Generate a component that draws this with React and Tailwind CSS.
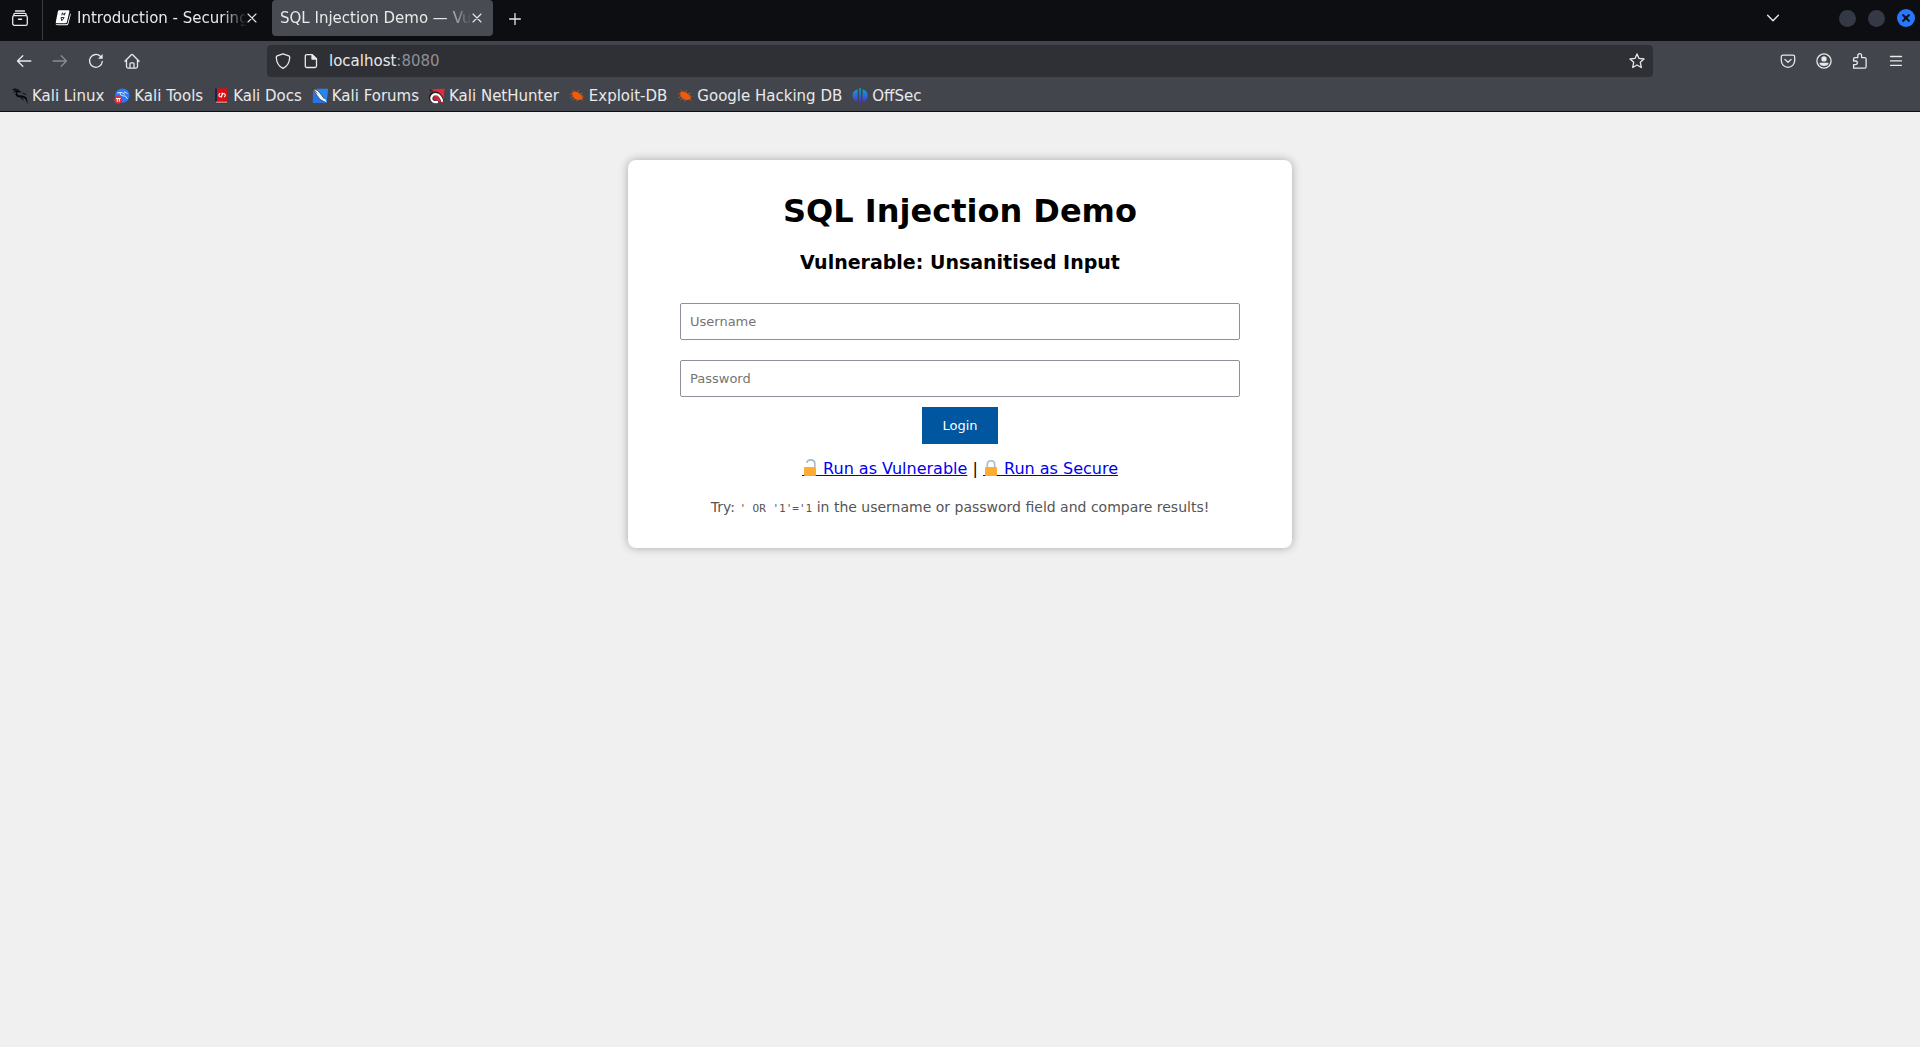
import React from "react";

const sans = "font-['DejaVu_Sans',sans-serif]";

function Icon({ size = "size-4", children, box = "0 0 16 16" }) {
  return (
    <svg
      className={size + " shrink-0"}
      viewBox={box}
      fill="none"
      stroke="currentColor"
      strokeWidth="1.3"
      strokeLinecap="round"
      strokeLinejoin="round"
      aria-hidden="true"
    >
      {children}
    </svg>
  );
}

const SidebarIcon = () => (
  <Icon>
    <path d="M3.5 1h9M1.800 5V4.800Q1.800 3.300 3.300 3.300H12.700Q14.200 3.300 14.200 4.800V5" />
    <rect x="0.7" y="5.600" width="14.600" height="9.700" rx="1.600" />
    <path d="M6.500 9.200h3" strokeWidth="1.500" />
  </Icon>
);

const BookIcon = () => (
  <svg className="size-4 shrink-0" viewBox="0 0 16 16" aria-hidden="true">
    <path d="M4.200.3h9.200q1.300 0 1 1.300l-2.500 10.400q-.3 1.200-1.500 1.200H1.800q-1.300 0-1-1.300L2.900 1.500Q3.200.3 4.200.3Z" fill="#fff" />
    <path d="M15.300 3.200q.7.500.4 1.500l-2.300 9q-.4 1.500-1.800 1.500H2.400Q.8 15.200.3 13.500q.6.800 1.800.8h9q1.300 0 1.600-1.300Z" fill="#fff" />
    <path d="M6.800 5.400l.7-2.600.9 1.700 1.700-1.700-.7 2.600M6.800 10.800l-.8-3.200h3.200l-2.400 3.200" stroke="#15161a" strokeWidth=".9" fill="none" />
  </svg>
);

const CloseIcon = () => (
  <Icon size="size-2.5" box="0 0 10 10">
    <path d="M1 1l8 8M9 1L1 9" strokeWidth="1.1" />
  </Icon>
);
const PlusIcon = () => (
  <Icon size="size-3" box="0 0 12 12">
    <path d="M6 .6v10.800M.6 6h10.800" />
  </Icon>
);
const ChevronIcon = () => (
  <Icon size="size-3" box="0 0 12 12">
    <path d="M.6 3.300L6 8.700l5.400-5.400" strokeWidth="1.400" />
  </Icon>
);
const BackIcon = () => (
  <Icon>
    <path d="M6.800 2.700L1.500 8l5.300 5.300M1.800 8h13" />
  </Icon>
);
const ForwardIcon = () => (
  <Icon>
    <path d="M9.200 2.700L14.500 8l-5.300 5.300M14.200 8h-13" />
  </Icon>
);
const ReloadIcon = () => (
  <Icon>
    <path d="M14.300 8.500A6.400 6.400 0 1 1 12.600 3.500" />
    <path d="M14.700 1v4.700H10z" fill="currentColor" stroke="none" />
  </Icon>
);
const HomeIcon = () => (
  <Icon>
    <path d="M.9 8.200L7.300 1.700Q8 1.100 8.700 1.700L15.100 8.200M2.500 7v6.600q0 1.500 1.500 1.500h8q1.500 0 1.500-1.500V7M6 15V10.800q0-1 1-1h2q1 0 1 1V15" />
  </Icon>
);
const ShieldIcon = () => (
  <Icon>
    <path d="M8 .8L13.800 2.900Q14.800 3.300 14.700 4.400C14.500 9.800 11.800 13.500 8 15.300C4.200 13.500 1.500 9.800 1.300 4.400Q1.200 3.300 2.200 2.900Z" />
  </Icon>
);
const PageIcon = () => (
  <Icon>
    <path d="M3.800 1.600h5.400l4.300 4.200v7.200q0 1.500-1.500 1.500H3.800q-1.500 0-1.500-1.500V3.100q0-1.500 1.500-1.500Z" />
    <path d="M9 1.600v4.500h4.500z" fill="currentColor" />
  </Icon>
);
const StarIcon = () => (
  <Icon>
    <path d="M8 .9l2 4.500 5 .6-3.700 3.300 1 5.200L8 12l-4.300 2.500 1-5.200L1 6l5-.6Z" />
  </Icon>
);
const PocketIcon = () => (
  <Icon>
    <path d="M3 2.200h10q1.700 0 1.700 1.700V7.600a6.700 6.700 0 0 1-13.400 0V3.900Q1.300 2.200 3 2.200ZM4.900 6.400L8 9.300l3.100-2.900" />
  </Icon>
);
const AccountIcon = () => (
  <Icon>
    <circle cx="8" cy="8" r="7.100" />
    <circle cx="8" cy="5.900" r="2.700" fill="currentColor" stroke="none" />
    <path d="M3.400 9.700h9.200q-.5 3.300-4.600 3.300t-4.600-3.300z" fill="currentColor" stroke="none" />
  </Icon>
);
const PuzzleIcon = () => (
  <Icon>
    <path d="M1.600 15.200V11.600h2a1.800 1.800 0 0 0 0-3.600h-2V5.800q0-1.200 1.200-1.200H5.800V2.600a1.900 1.900 0 0 1 3.800 0V4.600h3q1.500 0 1.500 1.500v7.600q0 1.500-1.500 1.500Z" />
  </Icon>
);
const MenuIcon = () => (
  <Icon>
    <path d="M2.500 3.500h11M2.500 7.900h11M2.500 12.300h11" />
  </Icon>
);

const dragon = "M0 1.700L4.500.3 3 1.500 7 1.400 6 2.500Q9 2.600 8.700 4.400L7 4Q4.800 4.100 5.200 6.100Q5.700 7.700 8 7.500Q12.300 7 14.300 9.500Q15.700 11.500 15.300 15.500Q14.500 11.400 12.300 10.100Q10.500 9 7.300 9.200Q4.300 9.200 3.600 6.500Q3.400 4.900 4.800 3.600L1 4.500 3.600 2.600Z M9.800 4.700Q13 5 14.800 7L12 6.100Z M9 9.200Q11.500 10.200 11.500 12.500Q10.800 11 8.700 10.200Z";

const Fav = ({ children }) => (
  <svg className="size-4 shrink-0" viewBox="0 0 16 16" aria-hidden="true">
    {children}
  </svg>
);
const LinuxFav = () => (
  <Fav>
    <path d={dragon} fill="#08090b" stroke="#08090b" strokeWidth=".2" />
  </Fav>
);
const ToolsFav = () => (
  <Fav>
    <circle cx="8.300" cy="7.600" r="7.200" fill="#2a78f5" />
    <path d="M3 5.200Q6 3.500 9 5l2 1.500M6 4.300Q5.500 7.500 8.500 7.600Q12.500 7.300 13.500 11M10 3.700L13.500 5.500" stroke="#e8f0ff" strokeWidth=".9" fill="none" />
    <circle cx="4.300" cy="11.800" r="4" fill="#e02b3a" />
    <path d="M2 10.500h4.600M3.300 10.500v3.300M5.300 10.500v3.300" stroke="#fff" strokeWidth="1" />
  </Fav>
);
const DocsFav = () => (
  <Fav>
    <path d="M2 .5h2V14H2z" fill="#16244f" />
    <path d="M4 .3h10v13.700H4z" fill="#dc0d12" />
    <path d="M2.500 13.800h11.500v1H3z" fill="#e7c9c9" />
    <path d="M2 14.800h12v.8H2z" fill="#941016" />
    <path d="M7.300 5.200Q5.700 5.800 6 7.500T8.200 8.500L9.600 6.200Q11 4.800 12 6.200T11.200 9M9.300 4.700L8.500 9.500" stroke="#fff" strokeWidth="1.100" fill="none" />
  </Fav>
);
const ForumsFav = () => (
  <Fav>
    <path d="M1 1h15l-1.500 14H.8z" fill="#2873e8" />
    <path d="M5 .8h11l-1.500 14-5-7z" fill="#2485f5" />
    <path d="M.2.6L5.800 2.600 9.800 7.400l5.200 7.400-6.900-3.300-4.100-5.500z" fill="#f5f5f2" stroke="#23262c" strokeWidth=".6" />
    <path d="M.3.6l5 4.800" stroke="#23262c" strokeWidth=".8" />
    <path d="M10 11.300L15 14.800 13 10.800" fill="#fff" />
  </Fav>
);
const HunterFav = () => (
  <Fav>
    <path d="M2 1.200L15.700.8 14 15 8 13z" fill="#e5283b" />
    <path d="M5 13.500Q.8 12 1.800 8.200Q3.600 4 8.500 5.600Q12.500 8 13.400 14" fill="none" stroke="#24181c" strokeWidth="3.400" />
    <path d="M9 14Q1.800 14.800 2.300 9.600Q3.800 4.800 8.600 6.500Q12.200 8.500 13.300 13.800" fill="none" stroke="#fff" strokeWidth="2.200" />
    <path d="M4.300 10.500Q5.500 8 8 9.200L10 12.300H5.500Z" fill="#d51e38" />
    <path d="M1 2l3 1.200" stroke="#20151a" strokeWidth="1.200" />
  </Fav>
);
const BugFav = () => (
  <Fav>
    <path d="M3.300 4.200Q6.200 2.500 9 4.400L12.700 7.200 14 10.800 10.600 11.900Q6.300 12.300 4.200 9Q2.700 6.800 3.300 4.200Z" fill="#ef5b0c" />
    <path d="M5.500 4L3.500 1.800M8.700 4.700L9.500 2.200M10.500 6l3.200-.9M12 8l3.200.3M3.500 6H.8M4 8.500L1.200 9.700M6 10.500l-2.700 1.700M9 11.700l-1.500 1.900M12.500 11l1.600 2" stroke="#b85a25" strokeWidth=".8" fill="none" />
  </Fav>
);
const OffsecFav = () => (
  <Fav>
    <defs>
      <linearGradient id="offsec" x1="0" y1="0" x2="0" y2="1">
        <stop offset="0" stopColor="#12a5c4" />
        <stop offset=".5" stopColor="#2c6bd8" />
        <stop offset="1" stopColor="#5a22c8" />
      </linearGradient>
    </defs>
    <path d="M5.600 1.200V14Q.5 12 .5 7.400T5.600 1.200ZM7.300.3h1.600v15.400H7.300ZM10.600 1.200V14Q15.700 12 15.700 7.400T10.600 1.200Z" fill="url(#offsec)" />
  </Fav>
);

const bookmarks = [
  ["Kali Linux", LinuxFav],
  ["Kali Tools", ToolsFav],
  ["Kali Docs", DocsFav],
  ["Kali Forums", ForumsFav],
  ["Kali NetHunter", HunterFav],
  ["Exploit-DB", BugFav],
  ["Google Hacking DB", BugFav],
  ["OffSec", OffsecFav],
];

function IconButton({ label, children, className = "" }) {
  return (
    <button type="button" aria-label={label} className={"flex h-8 w-9 shrink-0 items-center justify-center " + className}>
      {children}
    </button>
  );
}

function TabBar() {
  return (
    <div className="flex h-[41px] items-start bg-[#0d0e12]">
      <IconButton label="View tabs" className="mr-1 ml-0.5 mt-0.5">
        <SidebarIcon />
      </IconButton>
      <div className="h-10 w-px bg-[#3a3b40]" />
      <div className="ml-3 flex h-9 w-[206px] items-center" role="tab">
        <BookIcon />
        <span className="ml-1.5 w-[170px] whitespace-nowrap mask-r-from-85% mask-r-to-100%">
          Introduction - Securing
        </span>
        <button type="button" aria-label="Close Introduction tab">
          <CloseIcon />
        </button>
      </div>
      <div className="ml-[11px] flex h-9 w-[221px] items-center rounded bg-[#494b52] pl-2" role="tab" aria-selected="true">
        <span className="w-[192px] whitespace-nowrap mask-r-from-85% mask-r-to-100%">
          SQL Injection Demo — Vul
        </span>
        <button type="button" aria-label="Close SQL Injection Demo tab">
          <CloseIcon />
        </button>
      </div>
      <IconButton label="New tab" className="ml-1 mt-[3px]">
        <PlusIcon />
      </IconButton>
      <div className="flex-1" />
      <IconButton label="List all tabs" className="mt-0.5">
        <ChevronIcon />
      </IconButton>
      <div className="mr-[5px] ml-12 flex h-9 items-center gap-3">
        <button type="button" aria-label="Minimise" className="size-[17px] rounded-full bg-[#353945]" />
        <button type="button" aria-label="Maximise" className="size-[17px] rounded-full bg-[#353945]" />
        <button type="button" aria-label="Close" className="flex size-[18px] items-center justify-center rounded-full bg-[#2777ff] text-[#0d0e12]">
          <svg className="size-2" viewBox="0 0 8 8" stroke="currentColor" strokeWidth="2" aria-hidden="true">
            <path d="M.5.5l7 7M7.500.5l-7 7" />
          </svg>
        </button>
      </div>
    </div>
  );
}

function NavBar() {
  return (
    <div className="flex h-10 items-center px-1.5">
      <IconButton label="Back"><BackIcon /></IconButton>
      <IconButton label="Forward" className="text-[#8b8c91]"><ForwardIcon /></IconButton>
      <IconButton label="Reload"><ReloadIcon /></IconButton>
      <IconButton label="Home"><HomeIcon /></IconButton>
      <div className="mx-[117px] flex h-8 min-w-0 flex-1 items-center rounded bg-[#2f3035] px-2">
        <ShieldIcon />
        <span className="ml-3 flex"><PageIcon /></span>
        <span className="ml-2.5 flex-1 text-[#e9e9ea]">
          localhost<span className="text-[#8e8f93]">:8080</span>
        </span>
        <button type="button" aria-label="Bookmark this page"><StarIcon /></button>
      </div>
      <IconButton label="Save to Pocket"><PocketIcon /></IconButton>
      <IconButton label="Account"><AccountIcon /></IconButton>
      <IconButton label="Extensions"><PuzzleIcon /></IconButton>
      <IconButton label="Menu"><MenuIcon /></IconButton>
    </div>
  );
}

function Lock({ open = false }) {
  return (
    <svg className="inline-block h-5 w-4 align-[-4px]" viewBox="0 0 16 20" fill="none" aria-hidden="true">
      <path
        d={open ? "M5 5V4.700Q5.300 1.900 8.800 1.900T12.800 5V9" : "M4.300 10V6.500Q4.300 2.800 8 2.800T11.700 6.500V10"}
        stroke="#a8b9c4"
        strokeWidth="1.600"
      />
      <path d="M0 17.500h3M13 17.500h3" stroke="#0000ee" />
      <rect x="2" y="9" width="12" height="9" rx="1" fill="#ffac33" />
    </svg>
  );
}

const field =
  "block h-[37px] w-full rounded-xs border border-[#8f8f9d] bg-white px-[9px] text-[13px] text-black placeholder:text-[#757575] placeholder:opacity-100";

function LoginCard() {
  return (
    <main className="mx-auto mt-12 w-full max-w-[664px] rounded-lg bg-white px-8 pt-8 pb-[30px] text-center text-black shadow-[0_0_10px_rgba(0,0,0,0.3)]">
      <h1 className="text-[32px] leading-[38px] font-bold">SQL Injection Demo</h1>
      <h3 className="mt-5 text-[19px] leading-6 font-bold">Vulnerable: Unsanitised Input</h3>
      <form className="mx-5 mt-[29px]" onSubmit={(e) => e.preventDefault()}>
        <input className={field} aria-label="Username" placeholder="Username" />
        <input className={field + " mt-5"} type="password" aria-label="Password" placeholder="Password" />
        <button type="submit" className="mx-auto mt-2.5 block h-[37px] bg-[#00579f] px-5 text-[13px] text-white">
          Login
        </button>
      </form>
      <div className="mt-3.5 h-5 text-base leading-5">
        <a href="#vulnerable" className="text-[#0000ee] underline">
          <Lock open /> Run as Vulnerable
        </a>
        {" | "}
        <a href="#secure" className="text-[#0000ee] underline">
          <Lock /> Run as Secure
        </a>
      </div>
      <p className="mt-5 text-sm leading-[18px] text-[#555555]">
        Try: <code className="font-['DejaVu_Sans_Mono',monospace] text-[11px]">' OR '1'='1</code> in the username or
        password field and compare results!
      </p>
    </main>
  );
}

export default function App() {
  return (
    <div className={sans + " min-h-screen bg-[#f0f0f0]"}>
      <header className="border-b border-[#0d0e12] bg-[#43454c] text-[15px] text-[#e9e9ea]">
        <TabBar />
        <NavBar />
        <nav className="flex h-[30px] items-center gap-2.5 px-3">
          {bookmarks.map(([name, Glyph]) => (
            <a key={name} href="#bookmark" className="flex items-center gap-1 whitespace-nowrap">
              <Glyph />
              {name}
            </a>
          ))}
        </nav>
      </header>
      <LoginCard />
    </div>
  );
}
